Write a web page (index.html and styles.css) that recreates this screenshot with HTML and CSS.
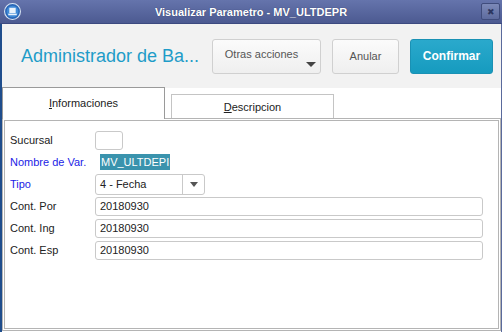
FILE: index.html
```html
<!DOCTYPE html>
<html lang="es">

<head>
    <meta charset="UTF-8">
    <title>Visualizar Parametro</title>
    <link rel="stylesheet" href="styles.css">
</head>

<body>
    <div id="window">
        <div class="titlebar">
            <span class="app-icon">
                <svg width="17" height="17" viewBox="0 0 16 16">
                    <circle cx="8" cy="8" r="7.5" fill="#2a67b8" stroke="#d9e4f2" stroke-width="1"/>
                    <circle cx="8" cy="8" r="5.5" fill="#3f8ad6"/>
                    <rect x="5" y="4.5" width="6" height="5" fill="#eaf2fb"/>
                    <rect x="4" y="10" width="8" height="1.5" fill="#eaf2fb"/>
                </svg>
            </span>
            <span class="title">Visualizar Parametro - MV_ULTDEPR</span>
            <button class="close">&#x2716;</button>
        </div>

        <div class="main">
            <header>
                <h1>Administrador de Ba...</h1>
                <button class="btn more">Otras acciones<span class="caret"></span></button>
                <button class="btn cancel">Anular</button>
                <button class="btn primary">Confirmar</button>
            </header>

            <!-- tabs -->
            <div class="tabs">
                <div class="tab active"><u>I</u>nformaciones</div>
                <div class="tab"><u>D</u>escripcion</div>
            </div>

            <div class="panel">
                <div class="row">
                    <label>Sucursal</label>
                    <div class="field small"></div>
                </div>
                <div class="row">
                    <label class="key">Nombre de Var.</label>
                    <div class="field plain"><span class="selected">MV_ULTDEPI</span></div>
                </div>
                <div class="row">
                    <label class="key">Tipo</label>
                    <div class="field select">
                        <span class="value">4 - Fecha</span>
                        <span class="arrow"></span>
                    </div>
                </div>
                <div class="row">
                    <label>Cont. Por</label>
                    <div class="field wide">20180930</div>
                </div>
                <div class="row">
                    <label>Cont. Ing</label>
                    <div class="field wide">20180930</div>
                </div>
                <div class="row">
                    <label>Cont. Esp</label>
                    <div class="field wide">20180930</div>
                </div>
            </div>
        </div>
    </div>
</body>

</html>
```

FILE: styles.css
```css
* {
    margin: 0;
    padding: 0;
    box-sizing: border-box;
    font-family: "Liberation Sans", Arial, sans-serif;
}

body {
    width: 502px;
    height: 332px;
    overflow: hidden;
    background-color: white;
}

#window {
    display: flex;
    flex-direction: column;
    height: 332px;
}

.titlebar {
    height: 24px;
    display: flex;
    align-items: center;
    padding: 0 2px 0 4px;
    background: linear-gradient(#6574ac, #4c5a91);
    border-bottom: 1px solid #3c4a80;
}

.app-icon {
    width: 17px;
    height: 17px;
    display: flex;
}

.title {
    flex: 1;
    text-align: center;
    color: white;
    font-size: 11px;
    font-weight: bold;
    text-shadow: 0 0 1px #2a3560;
}

.close {
    width: 19px;
    height: 17px;
    border: 1px solid #3f4c7c;
    border-radius: 2px;
    background: linear-gradient(#7c89b8, #5d6b9e);
    color: #2c3660;
    font-size: 9px;
    line-height: 14px;
}

.main {
    flex: 1;
    display: flex;
    flex-direction: column;
    border-left: 2px solid #1f4d8c;
    border-right: 1px solid #5a6a9c;
}

header {
    height: 64px;
    display: flex;
    align-items: center;
    padding: 0 8px 0 19px;
    background-color: #f2f2f2;
}

h1 {
    flex: 1;
    font-size: 18px;
    font-weight: normal;
    white-space: nowrap;
    color: #1e9cc8;
}

.btn {
    position: relative;
    height: 35px;
    margin-left: 11px;
    border: 1px solid #d0d0d0;
    border-radius: 3px;
    background: linear-gradient(#fbfbfb, #efefef);
    color: #555;
    font-size: 11px;
}

.more {
    width: 109px;
    padding: 0 10px 5px 0;
}

.caret {
    position: absolute;
    right: 4px;
    bottom: 6px;
    border-left: 5px solid transparent;
    border-right: 5px solid transparent;
    border-top: 5px solid #444;
}

.cancel {
    width: 67px;
}

.primary {
    width: 83px;
    border-color: #1a91b4;
    background: linear-gradient(#2aa9cc, #169bbf);
    color: white;
    font-size: 12px;
    font-weight: bold;
}

.tabs {
    height: 31px;
    display: flex;
    align-items: flex-end;
    gap: 6px;
    margin-bottom: -1px;
}

.tab {
    width: 163px;
    height: 25px;
    border: 1px solid #c4c4c4;
    border-bottom: none;
    background-color: white;
    font-size: 11px;
    color: #222;
    text-align: center;
    line-height: 25px;
}

.tab.active {
    height: 32px;
    line-height: 30px;
    border-color: #9a9a9a;
    position: relative;
    z-index: 1;
}

.panel {
    flex: 1;
    margin: 0 0 1px 0;
    border: 3px double #b4b4b4;
    padding: 8px 15px 0 4px;
}

.row {
    display: flex;
    align-items: center;
    height: 22px;
    font-size: 11px;
    color: #222;
}

label {
    width: 86px;
    padding-left: 1px;
}

.key {
    color: #1c1ce6;
}

.field {
    height: 19px;
    border: 1px solid #c9c9c9;
    border-radius: 3px;
    padding-left: 4px;
    line-height: 17px;
}

.small {
    width: 28px;
}

.plain {
    border-color: transparent;
    padding-left: 4px;
}

.selected {
    display: inline-block;
    white-space: nowrap;
    background-color: #3a93ad;
    color: white;
    line-height: 16px;
    padding: 0 1px;
}

.select {
    width: 110px;
    height: 21px;
    display: flex;
    align-items: center;
    padding-left: 4px;
}

.select .value {
    flex: 1;
}

.arrow {
    width: 22px;
    height: 19px;
    border-left: 1px solid #c9c9c9;
    display: flex;
    align-items: center;
    justify-content: center;
}

.arrow::after {
    content: "";
    border-left: 4px solid transparent;
    border-right: 4px solid transparent;
    border-top: 5px solid #555;
}

.wide {
    flex: 1;
}
```
